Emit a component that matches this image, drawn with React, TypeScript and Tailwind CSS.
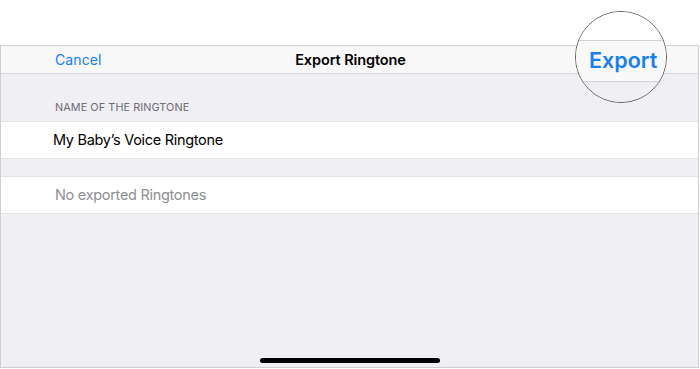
import React from "react";

export default function App() {
  const font = { fontFamily: "Inter, 'Noto Sans', sans-serif" };
  return (
    <div className="relative w-[700px] h-[369px] bg-white overflow-hidden" style={font}>
      <div className="h-[45px]" />
      <div className="w-[699px] h-[323px] border border-[#cfcfd2] bg-[#efeff4] flex flex-col">
        <div className="h-[28px] bg-[#f8f8f8] border-b border-[#d6d6da] relative flex items-center">
          <span className="absolute left-[54px] text-[14px] text-[#147efb] tracking-[0.1px]">Cancel</span>
          <span className="w-full text-center text-[14.5px] font-semibold text-black tracking-[-0.1px] pl-[2px]">Export Ringtone</span>
        </div>
        <div className="h-[47px] flex items-end pl-[54px] pb-[7px]">
          <span className="text-[10.8px] text-[#6d6d72] leading-none tracking-[0.1px]">NAME OF THE RINGTONE</span>
        </div>
        <div className="h-[38px] bg-white border-y border-[#e3e3e7] flex items-center pl-[52px]">
          <span className="text-[14.5px] text-black tracking-[-0.3px]">My Baby’s Voice Ringtone</span>
        </div>
        <div className="h-[17px]" />
        <div className="h-[38px] bg-white border-y border-[#e3e3e7] flex items-center pl-[54px]">
          <span className="text-[14.5px] text-[#8e8e93] tracking-[-0.3px]">No exported Ringtones</span>
        </div>
        <div className="flex-1 flex items-end justify-center pb-[4px]">
          <div className="w-[180px] h-[5px] rounded-full bg-black" />
        </div>
      </div>
      <div className="absolute left-[575px] top-[11px] w-[92px] h-[92px] rounded-full border border-[#5e5e5e] overflow-hidden flex flex-col">
        <div className="h-[28px] bg-white shrink-0" />
        <div className="h-[42px] shrink-0 bg-[#f9f9f9] border-y border-[#d2d2d6] flex items-center pl-[13px]">
          <span className="text-[21.5px] font-semibold text-[#147efb] leading-none">Export</span>
        </div>
        <div className="flex-1 bg-[#efeff4]" />
      </div>
    </div>
  );
}
